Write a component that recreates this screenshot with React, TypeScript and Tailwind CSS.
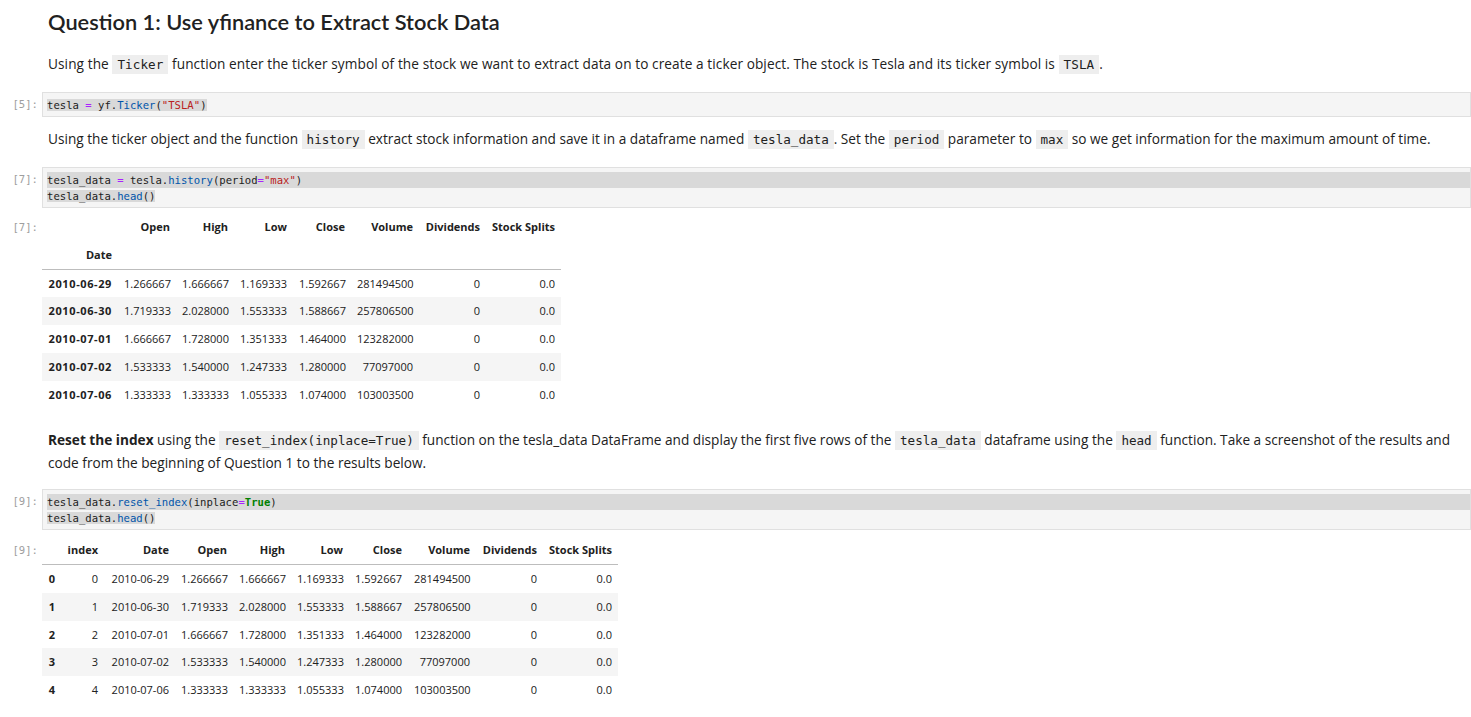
import React from "react";

const TXT = { fontFamily: "'Open Sans', Lato, sans-serif" };
const HEAD = { fontFamily: "Lato, 'Open Sans', sans-serif" };
const MONO = { fontFamily: "'DejaVu Sans Mono', 'Liberation Mono', monospace" };

function IC({ children }: { children: React.ReactNode }) {
  return (
    <code className="bg-[#eeeeee] px-[5px] py-[2px] text-[12.6px] text-[#212121]" style={MONO}>
      {children}
    </code>
  );
}

function Prompt({ n }: { n: number }) {
  return (
    <div className="w-[42px] shrink-0 pr-[4px] text-right text-[10.6px] leading-[16px] text-[#9e9e9e]" style={MONO}>
      [{n}]:
    </div>
  );
}

const P = "text-[#aa22ff]";
const B = "text-[#0055aa]";
const S = "text-[#ba2121]";

function CodeCell({ n, lines, mt }: { n: number; lines: React.ReactNode[]; mt: string }) {
  return (
    <div className={`flex ${mt}`}>
      <div className="pt-[4px]">
        <Prompt n={n} />
      </div>
      <div className="flex-1 border border-[#e0e0e0] bg-[#f5f5f5] py-[3.5px] pl-[4px] text-[10.6px] leading-[16px] text-[#212121]" style={MONO}>
        {lines.map((l, i) => (
          <div key={i} className={lines.length > 1 && i === 0 ? "bg-[#d9d9d9] whitespace-pre" : "whitespace-pre"}>
            <span className="bg-[#d9d9d9]">{l}</span>
          </div>
        ))}
      </div>
    </div>
  );
}

const rows = [
  ["2010-06-29", "1.266667", "1.666667", "1.169333", "1.592667", "281494500", "0", "0.0"],
  ["2010-06-30", "1.719333", "2.028000", "1.553333", "1.588667", "257806500", "0", "0.0"],
  ["2010-07-01", "1.666667", "1.728000", "1.351333", "1.464000", "123282000", "0", "0.0"],
  ["2010-07-02", "1.533333", "1.540000", "1.247333", "1.280000", "77097000", "0", "0.0"],
  ["2010-07-06", "1.333333", "1.333333", "1.055333", "1.074000", "103003500", "0", "0.0"],
];
const cols = ["Open", "High", "Low", "Close", "Volume", "Dividends", "Stock Splits"];

const td = "px-[6px] py-[6px] leading-[15.75px] text-right whitespace-nowrap";

function Table1() {
  const w = [76, 58, 58, 59, 58, 68, 67, 75];
  return (
    <table className="table-fixed border-collapse text-[11px] text-[#212121]" style={{ ...TXT, width: 519 }}>
      <colgroup>
        {w.map((x, i) => (
          <col key={i} style={{ width: x }} />
        ))}
      </colgroup>
      <thead className="border-b border-[#bdbdbd]">
        <tr>
          <th className={td}></th>
          {cols.map((c) => (
            <th key={c} className={`${td} font-bold`}>{c}</th>
          ))}
        </tr>
        <tr>
          <th className={`${td} font-bold`}>Date</th>
          {cols.map((c) => (
            <th key={c} className={td}></th>
          ))}
        </tr>
      </thead>
      <tbody>
        {rows.map((r, i) => (
          <tr key={i} className={i % 2 === 1 ? "bg-[#f5f5f5]" : ""}>
            <th className={`${td} font-bold tracking-[0.6px]`}>{r[0]}</th>
            {r.slice(1).map((v, j) => (
              <td key={j} className={`${td} font-normal`}>{v}</td>
            ))}
          </tr>
        ))}
      </tbody>
    </table>
  );
}

function Table2() {
  const w = [19, 43, 71, 58, 58, 58, 59, 68, 67, 75];
  return (
    <table className="table-fixed border-collapse text-[11px] text-[#212121]" style={{ ...TXT, width: 576 }}>
      <colgroup>
        {w.map((x, i) => (
          <col key={i} style={{ width: x }} />
        ))}
      </colgroup>
      <thead className="border-b border-[#bdbdbd]">
        <tr>
          <th className={td}></th>
          {["index", "Date", ...cols].map((c) => (
            <th key={c} className={`${td} font-bold`}>{c}</th>
          ))}
        </tr>
      </thead>
      <tbody>
        {rows.map((r, i) => (
          <tr key={i} className={i % 2 === 1 ? "bg-[#f5f5f5]" : ""}>
            <th className={`${td} font-bold`}>{i}</th>
            <td className={td}>{i}</td>
            {r.map((v, j) => (
              <td key={j} className={td}>{v}</td>
            ))}
          </tr>
        ))}
      </tbody>
    </table>
  );
}

export default function App() {
  return (
    <div className="w-[1471px] h-[717px] overflow-hidden bg-white text-[#212121]" style={TXT}>
      <h2 className="ml-[48px] mt-[7px] h-[30px] text-[21.8px] font-semibold leading-[30px] whitespace-nowrap" style={HEAD}>
        Question 1: Use yfinance to Extract Stock Data
      </h2>
      <p className="ml-[48px] mt-[16px] text-[13.65px] leading-[22px] whitespace-nowrap tracking-[0.08px]">
        Using the <IC>Ticker</IC> function enter the ticker symbol of the stock we want to extract data on to create a ticker object. The stock is Tesla and its ticker symbol is <IC>TSLA</IC>.
      </p>
      <CodeCell
        n={5}
        mt="mt-[16px]"
        lines={[
          <>
            tesla <span className={P}>=</span> yf.<span className={B}>Ticker</span>(<span className={S}>"TSLA"</span>)
          </>,
        ]}
      />
      <p className="ml-[48px] mt-[11px] text-[13.65px] leading-[22px] whitespace-nowrap">
        Using the ticker object and the function <IC>history</IC> extract stock information and save it in a dataframe named <IC>tesla_data</IC>. Set the <IC>period</IC> parameter to <IC>max</IC> so we get information for the maximum amount of time.
      </p>
      <CodeCell
        n={7}
        mt="mt-[16px]"
        lines={[
          <>
            tesla_data <span className={P}>=</span> tesla.<span className={B}>history</span>(period<span className={P}>=</span><span className={S}>"max"</span>)
          </>,
          <>
            tesla_data.<span className={B}>head</span>()
          </>,
        ]}
      />
      <div className="flex mt-[5px]">
        <div className="pt-[6px]">
          <Prompt n={7} />
        </div>
        <Table1 />
      </div>
      <p className="ml-[48px] mt-[21px] text-[13.65px] leading-[22px] whitespace-nowrap">
        <b className="font-bold">Reset the index</b> using the <IC>reset_index(inplace=True)</IC> function on the tesla_data DataFrame and display the first five rows of the <IC>tesla_data</IC> dataframe using the <IC>head</IC> function. Take a screenshot of the results and
        <br />
        code from the beginning of Question 1 to the results below.
      </p>
      <CodeCell
        n={9}
        mt="mt-[15px]"
        lines={[
          <>
            tesla_data.<span className={B}>reset_index</span>(inplace<span className={P}>=</span><span className="text-[#008000] font-bold">True</span>)
          </>,
          <>
            tesla_data.<span className={B}>head</span>()
          </>,
        ]}
      />
      <div className="flex mt-[6px]">
        <div className="pt-[6px]">
          <Prompt n={9} />
        </div>
        <Table2 />
      </div>
    </div>
  );
}
